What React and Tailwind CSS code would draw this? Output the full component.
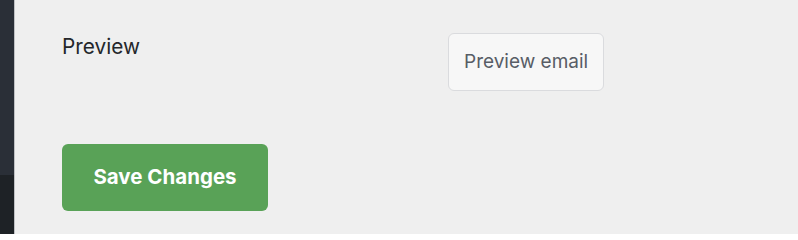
import React from "react";

export default function App() {
  return (
    <div className="flex h-[234px] w-[798px] overflow-hidden bg-[#efefef] font-['Inter',sans-serif]">
      <div className="flex w-[14px] shrink-0 flex-col">
        <div className="h-[175px] bg-[#2a2f37]" />
        <div className="flex-1 bg-[#1e2226]" />
      </div>
      <div className="w-px shrink-0 bg-[#bfc1c4]" />
      <div className="flex flex-1 flex-col pl-[47px] pt-[33px]">
        <div className="flex items-start">
          <div className="w-[386px] text-[20.8px] leading-[28px] text-[#24272b]">Preview</div>
          <button className="h-[58px] rounded-[6px] border border-[#dadbde] bg-[#f7f7f7] px-[15px] text-[19px] text-[#585d66]">
            Preview email
          </button>
        </div>
        <div className="mt-[53px]">
          <button className="h-[67px] w-[206px] rounded-[6px] bg-[#59a257] text-[20.5px] font-bold text-white">
            Save Changes
          </button>
        </div>
      </div>
    </div>
  );
}
